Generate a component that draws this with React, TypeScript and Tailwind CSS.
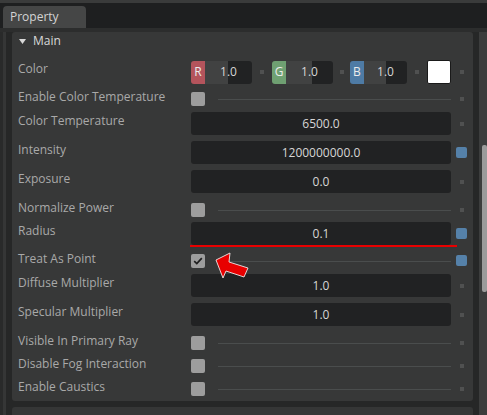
import React from 'react';

type Row =
  | { kind: 'value'; label: string; value: string; h: string; active?: boolean }
  | { kind: 'check'; label: string; checked?: boolean; h: string; active?: boolean }
  | { kind: 'color'; label: string; h: string };

const rows: Row[] = [
  { kind: 'color', label: 'Color', h: 'h-[32px]' },
  { kind: 'check', label: 'Enable Color Temperature', h: 'h-[20px]' },
  { kind: 'value', label: 'Color Temperature', value: '6500.0', h: 'h-[29px]' },
  { kind: 'value', label: 'Intensity', value: '1200000000.0', h: 'h-[29px]', active: true },
  { kind: 'value', label: 'Exposure', value: '0.0', h: 'h-[33px]' },
  { kind: 'check', label: 'Normalize Power', h: 'h-[19px]' },
  { kind: 'value', label: 'Radius', value: '0.1', h: 'h-[32px]', active: true },
  { kind: 'check', label: 'Treat As Point', checked: true, h: 'h-[20px]', active: true },
  { kind: 'value', label: 'Diffuse Multiplier', value: '1.0', h: 'h-[29px]' },
  { kind: 'value', label: 'Specular Multiplier', value: '1.0', h: 'h-[33px]' },
  { kind: 'check', label: 'Visible In Primary Ray', h: 'h-[23px]' },
  { kind: 'check', label: 'Disable Fog Interaction', h: 'h-[23px]' },
  { kind: 'check', label: 'Enable Caustics', h: 'h-[19px]' },
];

function Dot() {
  return <div className="w-[4px] h-[4px] bg-[#505151]" />;
}

function Indicator({ active, top }: { active?: boolean; top: string }) {
  return (
    <div className={`w-[21px] flex justify-center ${top}`}>
      {active ? <div className="w-[11px] h-[11px] rounded-[2px] bg-[#5581a9]" /> : <Dot />}
    </div>
  );
}

function Channel({ letter, badge, fill, w }: { letter: string; badge: string; fill: string; w: string }) {
  return (
    <div className={`flex h-[23px] rounded-[3px] overflow-hidden ${w}`}>
      <div className={`w-[14px] flex items-center justify-center text-[12px] text-[#ececec] ${badge}`}>{letter}</div>
      <div className={`flex-1 flex items-center justify-center text-[12px] text-[#d6d6d6] ${fill}`}>1.0</div>
    </div>
  );
}

function ColorWidget() {
  return (
    <div className="flex items-center w-[260px]">
      <Channel letter="R" badge="bg-[#b4545c]" fill="bg-[linear-gradient(to_right,#414242_49%,#212223_49%)]" w="w-[61px]" />
      <div className="w-[20px] flex justify-center"><Dot /></div>
      <Channel letter="G" badge="bg-[#6fa072]" fill="bg-[linear-gradient(to_right,#414242_55%,#212223_55%)]" w="w-[61px]" />
      <div className="w-[17px] flex justify-center"><Dot /></div>
      <Channel letter="B" badge="bg-[#4e7ba5]" fill="bg-[linear-gradient(to_right,#414242_50%,#212223_50%)]" w="w-[57px]" />
      <div className="w-[20px] flex justify-center"><Dot /></div>
      <div className="w-[24px] h-[24px] bg-white border border-[#1a1a1a] rounded-[2px]" />
    </div>
  );
}

function Checkbox({ checked }: { checked?: boolean }) {
  return (
    <div className="w-[14px] h-[14px] rounded-[2px] bg-[#9d9d9d] flex items-center justify-center">
      {checked && (
        <svg width="10" height="8" viewBox="0 0 10 8">
          <path d="M1.2 4.2 L3.8 6.6 L8.8 1.2" fill="none" stroke="#1e1e1e" strokeWidth="1.7" />
        </svg>
      )}
    </div>
  );
}

function PropertyRow({ row }: { row: Row }) {
  const isCheck = row.kind === 'check';
  const active = row.kind !== 'color' && row.active;
  let top = 'mt-[10px]';
  if (isCheck) top = active ? 'mt-[1px]' : 'mt-[5px]';
  else if (active) top = 'mt-[6px]';
  return (
    <div className={`flex items-start ${row.h}`}>
      <div
        className={`w-[179px] pl-[6px] text-[12px] leading-[18px] text-[#a9a9a9] whitespace-nowrap ${
          isCheck ? '-mt-[4px]' : ''
        }`}
      >
        {row.label}
      </div>
      {row.kind === 'color' && <ColorWidget />}
      {row.kind === 'value' && (
        <div className="w-[260px] h-[23px] rounded-[3px] bg-[#212223] flex items-center justify-center text-[12px] text-[#d6d6d6]">
          {row.value}
        </div>
      )}
      {row.kind === 'check' && (
        <div className="w-[260px] flex items-center">
          <Checkbox checked={row.checked} />
          <div className="ml-[13px] flex-1 h-px bg-[#4a4d4d]" />
        </div>
      )}
      <Indicator active={active} top={top} />
    </div>
  );
}

export default function App() {
  return (
    <div
      className="relative w-[487px] h-[415px] overflow-hidden flex flex-col bg-[#2b2c2c] select-none"
      style={{ fontFamily: '"Open Sans", "Noto Sans", sans-serif' }}
    >
      <div className="h-[3px] bg-[#3a3b3b]" />
      <div className="h-[25px] bg-[#1e1f20] flex items-end pl-[3px]">
        <div className="w-[83px] h-[22px] rounded-t-[4px] bg-[#454646] flex items-center pl-[7px] text-[12px] text-[#d4d4d4]">
          Property
        </div>
      </div>
      <div className="flex-1 flex pt-[4px] bg-[#2c2d2d]">
        <div className="w-[3px] bg-[#292a2a]" />
        <div className="w-[3px] bg-[#353636]" />
        <div className="w-[6px] bg-[#262727]" />
        <div className="flex-1 flex flex-col bg-[#262727]">
          <div className="h-[369px] bg-[#373838] rounded-[3px] flex flex-col">
            <div className="h-[18px] flex items-center text-[12px] text-[#d8d8d8]">
              <svg width="7" height="5" viewBox="0 0 7 5" className="ml-[7px] mr-[7px]">
                <path d="M0 0 H7 L3.5 5 Z" fill="#d8d8d8" />
              </svg>
              Main
            </div>
            <div className="h-[10px]" />
            {rows.map((r) => (
              <PropertyRow key={r.label} row={r} />
            ))}
          </div>
          <div className="h-[6px]" />
          <div className="flex-1 bg-[#353636] rounded-t-[3px]" />
        </div>
        <div className="w-[6px] bg-[#262727]" />
        <div className="w-[8px] bg-[#3c3d3d] pt-[113px]">
          <div className="ml-[3px] w-[5px] h-[147px] rounded-[2px] bg-[#9b9b9b]" />
        </div>
      </div>

      {/* annotation: red underline + arrow */}
      <div className="absolute left-[190px] top-[245px] w-[267px] h-[2px] bg-[#e80000]" />
      <svg className="absolute left-[212px] top-[250px]" width="42" height="32" viewBox="0 0 42 32">
        <polygon
          points="4,10 18,3 17,12 36,18 32,27 14,21 11,28"
          fill="#e80000"
          stroke="#f2e6e6"
          strokeWidth="0.9"
          strokeLinejoin="round"
        />
      </svg>
    </div>
  );
}
